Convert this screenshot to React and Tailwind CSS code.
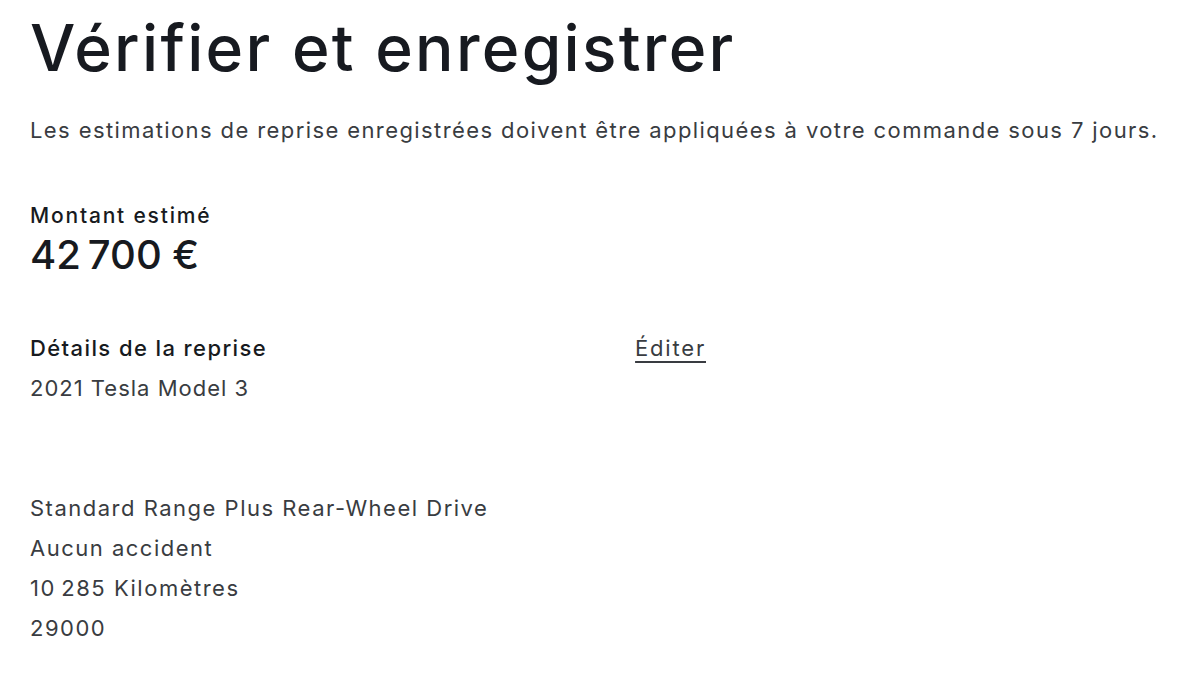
const DETAILS = [
  'Standard Range Plus Rear-Wheel Drive',
  'Aucun accident',
  '10\u202f285 Kilomètres',
  '29000',
];

export default function App() {
  return (
    <div className="w-[1200px] h-[680px] bg-white px-[30px] font-['Inter',sans-serif] text-[#393c41] overflow-hidden">
      {/* ── Heading ── */}
      <h1 className="pt-[10px] text-[64px] leading-[76px] font-medium text-[#171a20] tracking-[2.3px]">
        Vérifier et enregistrer
      </h1>
      <p className="mt-[30px] text-[22px] leading-[28px] tracking-[1.4px]">
        Les estimations de reprise enregistrées doivent être appliquées à votre commande sous 7 jours.
      </p>

      {/* ── Estimated amount ── */}
      <div className="mt-[58px] text-[21px] leading-[28px] font-medium text-[#171a20] tracking-[1.8px]">
        Montant estimé
      </div>
      <div className="mt-[2px] text-[40px] leading-[46px] font-medium text-[#171a20] tracking-[3px]">
        {'42\u202f700 €'}
      </div>

      {/* ── Trade-in details ── */}
      <div className="mt-[56px] flex w-[676px] justify-between text-[22px] leading-[28px] tracking-[1.4px]">
        <span className="font-medium text-[#171a20]">Détails de la reprise</span>
        <a className="underline decoration-[1.5px] underline-offset-[5px] text-[#393c41] tracking-[1.8px]">Éditer</a>
      </div>
      <div className="mt-[12px] text-[22px] leading-[28px] tracking-[1px]">2021 Tesla Model 3</div>

      <div className="mt-[92px] flex flex-col gap-[12px] text-[22px] leading-[28px] tracking-[1.5px]">
        {DETAILS.map(d => (
          <div key={d}>{d}</div>
        ))}
      </div>
    </div>
  );
}
